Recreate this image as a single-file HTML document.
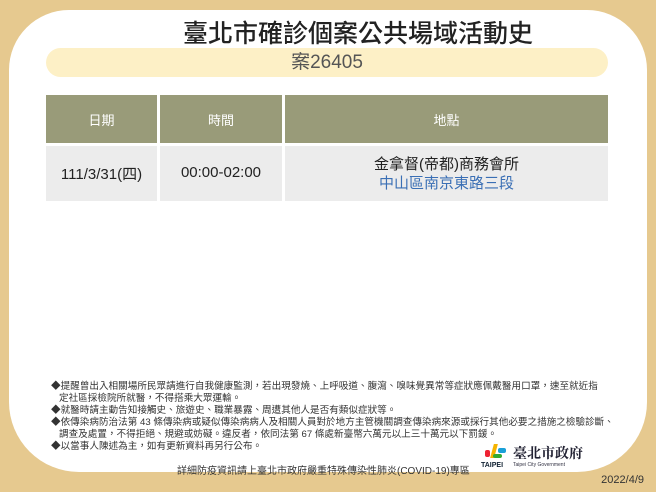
<!DOCTYPE html>
<html><head><meta charset="utf-8"><style>
*{margin:0;padding:0;box-sizing:border-box}
body{width:656px;height:492px;background:#e6c98f;position:relative;overflow:hidden;font-family:"Liberation Sans","Noto Sans CJK TC",sans-serif}
.card{position:absolute;left:9px;top:10px;width:638px;height:462px;background:#fff;border-radius:60px 60px 70px 70px}
.title{position:absolute;left:0;width:656px;top:14px;text-align:center;font-size:25px;color:#222;padding-left:60px;font-weight:500}
.pill{position:absolute;left:46px;top:48px;width:562px;height:29px;border-radius:15px;background:#fdf0c6;text-align:center;font-size:19px;line-height:29px;color:#555}
.c{position:absolute;display:flex;align-items:center;justify-content:center;text-align:center}
.h{background:#999b79;color:#fff;font-size:13px;top:95px;height:48px}
.d{background:#ececec;color:#222;font-size:15px;top:146px;height:55px}
.notes{position:absolute;left:51px;top:381px;font-size:9.6px;line-height:12px;color:#333;white-space:nowrap}
.foot{position:absolute;left:177px;top:462px;font-size:10px;color:#333}
.date{position:absolute;right:12px;top:474px;font-size:11px;color:#333}
</style></head><body>
<div class="card"></div>
<div class="title">臺北市確診個案公共場域活動史</div>
<div class="pill">案26405</div>
<div class="c h" style="left:46px;width:111px">日期</div>
<div class="c h" style="left:160px;width:122px">時間</div>
<div class="c h" style="left:285px;width:323px">地點</div>
<div class="c d" style="left:46px;width:111px">111/3/31(四)</div>
<div class="c d" style="left:160px;width:122px;padding-bottom:3px">00:00-02:00</div>
<div class="c d" style="left:285px;width:323px;flex-direction:column;line-height:19px">金拿督(帝都)商務會所<span style="color:#3a6fb5">中山區南京東路三段</span></div>
<div class="notes">◆提醒曾出入相關場所民眾請進行自我健康監測，若出現發燒、上呼吸道、腹瀉、嗅味覺異常等症狀應佩戴醫用口罩，速至就近指<br>&nbsp;&nbsp;&nbsp;定社區採檢院所就醫，不得搭乘大眾運輸。<br>◆就醫時請主動告知接觸史、旅遊史、職業暴露、周遭其他人是否有類似症狀等。<br>◆依傳染病防治法第 43 條傳染病或疑似傳染病病人及相關人員對於地方主管機關調查傳染病來源或採行其他必要之措施之檢驗診斷、<br>&nbsp;&nbsp;&nbsp;調查及處置，不得拒絕、規避或妨礙。違反者，依同法第 67 條處新臺幣六萬元以上三十萬元以下罰鍰。<br>◆以當事人陳述為主，如有更新資料再另行公布。</div>
<div class="foot">詳細防疫資訊請上臺北市政府嚴重特殊傳染性肺炎(COVID-19)專區</div>
<div style="position:absolute;left:483px;top:442px;width:26px;height:20px">
<div style="position:absolute;left:2px;top:8px;width:5px;height:7px;background:#e23;border-radius:2px"></div>
<div style="position:absolute;left:9px;top:2px;width:4px;height:14px;background:#f5b400;transform:skewX(-15deg)"></div>
<div style="position:absolute;left:15px;top:6px;width:8px;height:5px;background:#1aa0d8;border-radius:2px"></div>
<div style="position:absolute;left:10px;top:12px;width:9px;height:4px;background:#3a3;border-radius:2px"></div>
</div>
<div style="position:absolute;left:481px;top:462px;font-size:7px;font-weight:bold;color:#123">TAIPEI</div>
<div style="position:absolute;left:513px;top:443px;font-size:14px;font-weight:bold;color:#223;font-family:'Liberation Serif','Noto Serif CJK SC',serif">臺北市政府</div>
<div style="position:absolute;left:513px;top:462px;font-size:5px;color:#334">Taipei City Government</div>
<div class="date">2022/4/9</div>
</body></html>
